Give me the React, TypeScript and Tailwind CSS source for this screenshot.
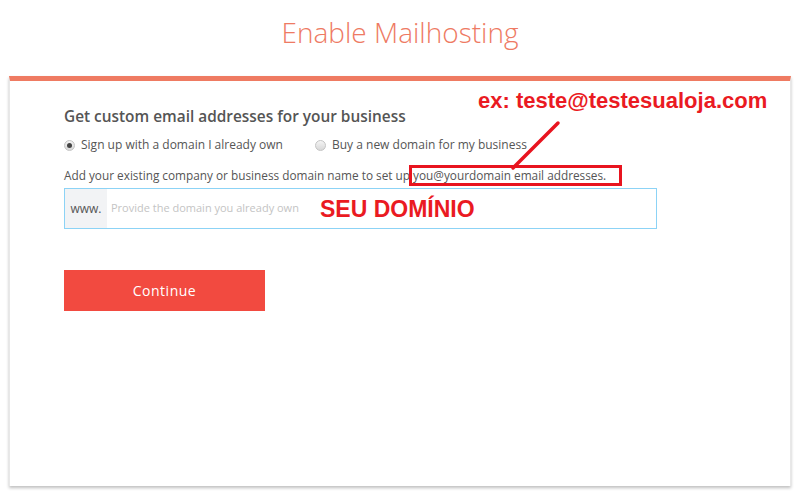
import React from 'react';

const Radio: React.FC<{ checked?: boolean; label: string }> = ({ checked, label }) => (
  <label className="flex items-center gap-[6px]">
    <span className="w-[11px] h-[11px] rounded-full border border-[#c4c4c4] bg-gradient-to-b from-[#f4f4f4] to-[#d8d8d8] flex items-center justify-center">
      {checked && <span className="w-[5px] h-[5px] rounded-full bg-[#444]" />}
    </span>
    <span>{label}</span>
  </label>
);

export default function App() {
  return (
    <div className="relative w-[800px] h-[491px] bg-white overflow-hidden font-['Open_Sans',sans-serif] text-[#555]">
      <h1 className="pt-[14px] h-[50px] text-center text-[28px] leading-[36px] font-light text-[#ee7a63]">
        Enable Mailhosting
      </h1>

      {/* Card */}
      <div className="mx-[9px] mt-[26px] h-[410px] border-t-[5px] border-t-[#ef7b62] border-x border-x-[#e8e8e8] bg-white shadow-[0_2px_3px_rgba(0,0,0,0.25)] pl-[54px] pt-[26px]">
        <h2 className="text-[15.4px] leading-[20px] font-semibold text-[#555]">
          Get custom email addresses for your business
        </h2>

        <div className="mt-[9px] flex items-center text-[12px] leading-[18px] text-[#555]">
          <div className="w-[251px]">
            <Radio checked label="Sign up with a domain I already own" />
          </div>
          <Radio label="Buy a new domain for my business" />
        </div>

        <p className="mt-[12px] text-[11.8px] leading-[18px] text-[#555]">
          Add your existing company or business domain name to set up you@yourdomain email addresses.
        </p>

        <div className="mt-[4px] w-[593px] h-[41px] flex border border-[#8cd3f6]">
          <div className="w-[42px] bg-[#f2f3f5] flex items-center justify-center text-[12px] text-[#555]">
            www.
          </div>
          <input
            className="flex-1 px-[4px] text-[11px] outline-none placeholder:text-[#c4c4c4]"
            placeholder="Provide the domain you already own"
          />
        </div>

        <button className="mt-[41px] w-[201px] h-[41px] bg-[#f24a40] text-white text-[14px] tracking-[0.5px]">
          Continue
        </button>
      </div>

      {/* Annotations */}
      <div className="absolute left-[478px] top-[88px] font-['Liberation_Sans',Arial,sans-serif] font-bold text-[22px] leading-[26px] text-[#ea1a22]">
        ex: teste@testesualoja.com
      </div>
      <svg className="absolute left-0 top-0" width="800" height="491">
        <line x1="558" y1="123" x2="513" y2="168" stroke="#e8141f" strokeWidth="3.5" strokeLinecap="round" />
      </svg>
      <div className="absolute left-[409px] top-[165px] w-[213px] h-[21px] border-[3px] border-[#e8141f]" />
      <div className="absolute left-[320px] top-[195px] font-['Liberation_Sans',Arial,sans-serif] font-bold text-[23px] leading-[28px] text-[#ea1a22]">
        SEU DOMÍNIO
      </div>
    </div>
  );
}
